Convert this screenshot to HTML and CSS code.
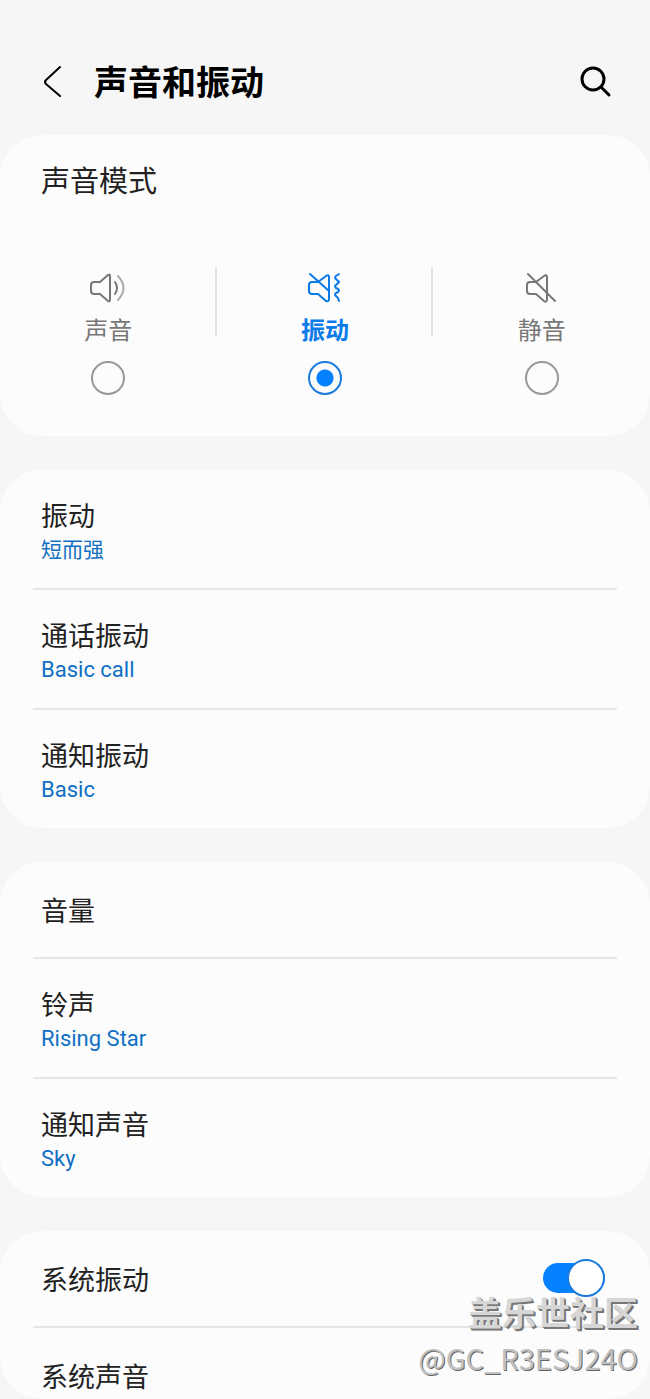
FILE: index.html
```html
<!DOCTYPE html>
<html lang="zh-CN">
<head>
  <meta charset="UTF-8" />
  <meta name="viewport" content="width=device-width, initial-scale=1.0" />
  <title>声音和振动</title>
  <link rel="stylesheet" href="styles.css">
</head>
<body>
  <header class="header">
    <button class="icon-button" type="button" aria-label="返回">
      <svg width="32" height="40" viewBox="0 0 32 40"><path d="M24 6 L10 19 Q8 21 10 23 L24 35" /></svg>
    </button>
    <h1>声音和振动</h1>
    <button class="icon-button search" type="button" aria-label="搜索">
      <svg width="40" height="40" viewBox="0 0 40 40"><circle cx="18" cy="18" r="11" /><path d="M26 26 L34 34" /></svg>
    </button>
  </header>

  <main>
    <!-- 声音模式 -->
    <section class="card mode-card">
      <h2>声音模式</h2>
      <div class="modes">
        <label class="mode">
          <svg width="40" height="40" viewBox="0 0 40 40">
            <path d="M12 14 L20 7 Q22 6 22 8 V32 Q22 34 20 33 L12 26 H6 Q3 26 3 23 V17 Q3 14 6 14 Z" />
            <path d="M27 14 Q31 20 27 26" />
            <path class="faint" d="M30 8 Q41 20 30 32" />
          </svg>
          <span>声音</span>
          <input type="radio" name="mode" value="sound" />
        </label>
        <label class="mode">
          <svg width="40" height="40" viewBox="0 0 40 40">
            <path d="M13 14 L21 8 Q24 6 24 9 V31 Q24 34 21 33 L13 26 H7 Q4 26 4 23 V17 Q4 14 7 14 Z" />
            <path d="M5 6 L24 23" />
            <path d="M34 6 L31 8 Q29 10 31 11 L33 13 Q35 14 33 15 L31 17 Q29 18 31 20 L33 21 Q35 22 33 24 L31 25 Q29 27 31 28 L33 30 L34 33" />
          </svg>
          <span>振动</span>
          <input type="radio" name="mode" value="vibrate" checked />
        </label>
        <label class="mode">
          <svg width="40" height="40" viewBox="0 0 40 40">
            <path d="M14 14 L22 8 Q25 6 25 9 V31 Q25 35 22 33 L14 26 H8 Q5 26 5 23 V17 Q5 14 8 14 Z" />
            <path d="M6 6 L33 33" />
          </svg>
          <span>静音</span>
          <input type="radio" name="mode" value="mute" />
        </label>
      </div>
    </section>

    <!-- 振动 -->
    <section class="card">
      <a class="row" href="#"><span class="name">振动</span><span class="value">短而强</span></a>
      <a class="row" href="#"><span class="name">通话振动</span><span class="value" lang="en">Basic call</span></a>
      <a class="row" href="#"><span class="name">通知振动</span><span class="value" lang="en">Basic</span></a>
    </section>

    <!-- 音量和铃声 -->
    <section class="card">
      <a class="row single" href="#"><span class="name">音量</span></a>
      <a class="row" href="#"><span class="name">铃声</span><span class="value" lang="en">Rising Star</span></a>
      <a class="row" href="#"><span class="name">通知声音</span><span class="value" lang="en">Sky</span></a>
    </section>

    <!-- 系统 -->
    <section class="card">
      <div class="row single switch-row">
        <label class="name" for="system-vibration">系统振动</label>
        <input class="switch" type="checkbox" id="system-vibration" checked />
      </div>
      <a class="row single last" href="#"><span class="name">系统声音</span></a>
    </section>
  </main>

  <div class="watermark">
    <p class="site">盖乐世社区</p>
    <p class="user">@GC_R3ESJ24O</p>
  </div>
</body>
</html>
```
FILE: styles.css
```css
* {
  box-sizing: border-box;
}
body {
  margin: 0;
  position: relative;
  background-color: #f6f6f6;
  color: #222;
  font-family: Roboto, 'Noto Sans CJK SC', sans-serif;
}
h1, h2, p {
  margin: 0;
}
svg {
  fill: none;
  stroke: currentColor;
  stroke-width: 2;
  stroke-linecap: round;
  stroke-linejoin: round;
}
.header {
  display: flex;
  align-items: center;
  padding: 57px 35px 30px 36px;
}
.header h1 {
  flex: 1;
  margin-left: 26px;
  padding-top: 4px;
  font-size: 34px;
  line-height: 44px;
  color: #000;
}
.icon-button {
  display: flex;
  padding: 0;
  border: none;
  background: none;
  color: #000;
  cursor: pointer;
}
.search svg {
  stroke-width: 3;
}
.card {
  margin-bottom: 34px;
  padding: 0 33px;
  border-radius: 42px;
  background-color: #fcfcfc;
}
.card:last-child {
  margin-bottom: 0;
}

/* 声音模式 */
.mode-card {
  padding: 29px 0 41px;
}
.mode-card h2 {
  padding: 0 41px;
  font-size: 29px;
  font-weight: normal;
  line-height: 36px;
}
.modes {
  display: grid;
  grid-template-columns: repeat(3, 1fr);
  margin-top: 68px;
}
.mode {
  display: flex;
  flex-direction: column;
  align-items: center;
  color: #777;
  font-size: 24px;
  line-height: 36px;
  background: linear-gradient(#e2e2e2, #e2e2e2) right top / 2px 68px no-repeat;
}
.mode:last-child {
  background: none;
}
.mode span {
  margin: 5px 0 12px;
}
.mode .faint {
  opacity: 0.6;
}
.mode:has(input:checked) {
  color: #0a7cea;
  font-weight: bold;
}
.mode input {
  appearance: none;
  width: 34px;
  height: 34px;
  margin: 0;
  border: 2px solid #999;
  border-radius: 50%;
}
.mode input:checked {
  border-color: #1a7bdc;
  background: radial-gradient(circle, #0381fe 8px, transparent 9px);
}

/* 设置项 */
.row {
  display: flex;
  flex-direction: column;
  padding: 29px 8px 23px;
  color: inherit;
  text-decoration: none;
}
.row + .row {
  border-top: 2px solid #e6e6e6;
}
.name {
  font-size: 27px;
  line-height: 36px;
}
.value {
  font-size: 21px;
  line-height: 30px;
  color: #0f6fc4;
}
.value:lang(en) {
  font-size: 22px;
}
.single {
  padding: 32px 8px 27px;
}
.switch-row {
  flex-direction: row;
  align-items: flex-start;
  justify-content: space-between;
  padding-right: 12px;
}
.last {
  padding-bottom: 3px;
}
.switch {
  appearance: none;
  position: relative;
  width: 62px;
  height: 30px;
  margin: 0;
  border-radius: 16px;
  background-color: #0381fe;
}
.switch::after {
  content: '';
  position: absolute;
  top: -4px;
  right: 0;
  width: 34px;
  height: 34px;
  border: 2px solid #1a7bdc;
  border-radius: 50%;
  background-color: #fff;
}

/* 右下角水印 */
.watermark {
  position: absolute;
  right: 12px;
  bottom: 22px;
  text-align: right;
  pointer-events: none;
}
.site {
  font-size: 34px;
  font-weight: bold;
  line-height: 46px;
  color: #d6d6d6;
  text-shadow: 1px 1px 0 #777, 2px 2px 0 #777;
}
.user {
  font-family: 'Noto Sans CJK SC', sans-serif;
  font-size: 29px;
  line-height: 40px;
  color: #c0c0c0;
  text-shadow: 1px 1px 0 #666;
}
```
